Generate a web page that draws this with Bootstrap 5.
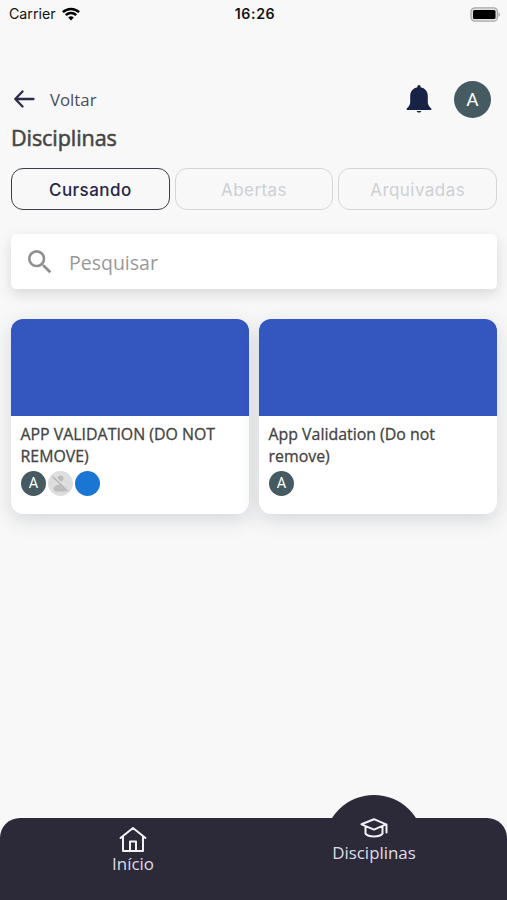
<!DOCTYPE html>
<html lang="pt-BR">
<head>
<meta charset="utf-8">
<meta name="viewport" content="width=device-width, initial-scale=1">
<title>Disciplinas</title>
<link href="https://cdn.jsdelivr.net/npm/bootstrap@5.3.0/dist/css/bootstrap.min.css" rel="stylesheet">
<style>
body{background:#f8f8f8;font-family:"Open Sans",sans-serif;color:#444;height:900px;overflow:hidden}
svg{display:block;flex:none}
.status{height:28px;padding:0 6px 0 9px;font-family:Inter,sans-serif;font-size:14.2px;line-height:28px;color:#111}
.status>div{flex:1 1 0}
.clock{font-weight:600;letter-spacing:.6px}
.topbar{height:40px;margin-top:51px;padding:0 16px 0 14px}
.back{font-size:16.8px;color:#4a4a5c;gap:15px}
.voltar{padding-top:1px}
.avatar{width:37px;height:37px;background:#455a61;color:#fff;font:400 19px/37px Roboto,sans-serif}
.avatar-sm{width:25px;height:25px;font-size:14.5px;line-height:26px}
.title{font:400 21.6px/30px "Open Sans",sans-serif;color:#454545;-webkit-text-stroke:.55px #454545;letter-spacing:-.1px;margin:4px 0 15px 11px}
.tabs{padding:0 10px 0 11px;gap:5px}
.tab{flex:1 1 0;height:42px;padding:2px 0 0;border:1px solid #d4d5d6;border-radius:12px;color:#cdd0d3;font:500 17px/38px Inter,sans-serif;letter-spacing:.45px;background:transparent}
.tab:not(.current){font-weight:400}
.tab.current{border-color:#3d3d47;color:#25254a}
.search{height:55px;margin:24px 10px 0 11px;padding-left:17px;background:#fff;border-radius:5px;box-shadow:0 5px 14px rgba(0,0,0,.13);color:#999;font-size:19.5px;gap:17px}
.search span{padding-top:2px}
.courses{margin:30px 10px 0 11px;gap:10px}
.course{flex:1 1 0;height:195px;border:0;border-radius:12px;overflow:hidden;box-shadow:0 6px 20px rgba(50,60,75,.17)}
.cover{height:97px;background:#3456bf}
.course-name{font-size:15.9px;line-height:22px;color:#444;-webkit-text-stroke:.3px #444;padding:7px 10px 0 9.5px;height:55px}
.people{padding-left:10px;gap:2px}
.person{background:#dedede}
.blue{background:#1976d2}
.bottom{height:82px;background:#2c2939;border-radius:20px 20px 0 0;color:#dedde6;font-size:16.9px;line-height:22px}
.bump{left:324px;top:-23px;width:100px;height:100px;border-radius:50%;background:#2c2939}
.bottom a{color:inherit;text-decoration:none}
.home{width:266px;padding-top:8px}
.subjects{width:216px}
</style>
</head>
<body class="d-flex flex-column">
<div class="status d-flex">
  <div class="d-flex align-items-center"><span class="carrier">Carrier</span>
    <svg width="18" height="14" viewBox="0 0 18 14" fill="none" stroke="#000" stroke-width="2.500" style="margin-left:6px"><path d="M.9 5.200a11.600 11.600 0 0 1 16.200 0M3.800 8.200a7.500 7.500 0 0 1 10.400 0"/><path d="M9 13.500 6.200 10.600a4 4 0 0 1 5.600 0z" fill="#000" stroke="none"/></svg>
  </div>
  <div class="clock text-center">16:26</div>
  <div class="d-flex align-items-center justify-content-end">
    <svg width="31" height="15" viewBox="0 0 31 15"><rect x="1" y=".8" width="26.500" height="13.400" rx="4" fill="#e0e0e0" stroke="#aaa" stroke-width="1.300"/><rect x="3" y="3" width="22.500" height="9" rx="1.500"/><path d="M28.500 5q3 2.500 0 5z" fill="#aaa"/></svg>
  </div>
</div>
<header class="topbar d-flex align-items-center justify-content-between">
  <div class="back d-flex align-items-center">
    <svg width="21" height="18" viewBox="0 0 21 18" fill="none" stroke="#2c2b4b" stroke-width="2.300" stroke-linecap="round" stroke-linejoin="round"><path d="M19.500 9H1.500M8.500 1.500 1.300 9l7.200 7.500"/></svg>
    <span class="voltar">Voltar</span>
  </div>
  <div class="d-flex align-items-center">
    <svg width="26" height="28" viewBox="0 0 26 28" fill="#182244" style="margin-right:22px"><path d="M13 0c1 0 1.600.8 1.600 1.700v.5c4.300.8 7.200 4.100 7.200 8.500v6.200c0 2.600 1 4.200 3.500 6.500V25H.7v-1.600c2.500-2.300 3.500-3.900 3.500-6.500v-6.200c0-4.400 2.900-7.700 7.200-8.500v-.5C11.400.8 12 0 13 0zM10.700 26h4.600c-.5 2-4.100 2-4.600 0z"/></svg>
    <div class="avatar rounded-circle text-center">A</div>
  </div>
</header>
<h1 class="title"><span>Disciplinas</span></h1>
<div class="tabs d-flex">
  <button class="tab current"><span>Cursando</span></button>
  <button class="tab"><span>Abertas</span></button>
  <button class="tab"><span>Arquivadas</span></button>
</div>
<div class="search d-flex align-items-center">
  <svg width="24" height="24" viewBox="3 3 18 18" fill="#8f8f8f"><path d="M15.500 14h-.79l-.28-.27A6.471 6.471 0 0 0 16 9.500 6.500 6.500 0 1 0 9.500 16c1.610 0 3.090-.59 4.230-1.570l.27.28v.79l5 4.990L20.490 19l-4.990-5zm-6 0C7.010 14 5 11.990 5 9.500S7.010 5 9.500 5 14 7.010 14 9.500 11.990 14 9.500 14z"/></svg>
  <span>Pesquisar</span>
</div>
<main class="courses d-flex">
  <article class="course card">
    <div class="cover"></div>
    <div class="course-name">APP VALIDATION (DO NOT REMOVE)</div>
    <div class="people d-flex">
      <span class="avatar avatar-sm rounded-circle text-center">A</span>
      <svg class="person rounded-circle" width="25" height="25" viewBox="0 0 25 25"><circle cx="12.500" cy="7.500" r="3" fill="#bcbcbc"/><path d="M5.500 18q1-4.500 7-4.500t7 4.500l-2 2.500h-10z" fill="#bcbcbc"/><path d="M4 4 20 19.500" stroke="#dedede" stroke-width="3"/><path d="M4.500 5.500 19.500 20" stroke="#b5b5b5" stroke-width="1.400"/></svg>
      <span class="avatar avatar-sm blue rounded-circle"></span>
    </div>
  </article>
  <article class="course card">
    <div class="cover"></div>
    <div class="course-name">App Validation (Do not remove)</div>
    <div class="people d-flex"><span class="avatar avatar-sm rounded-circle text-center">A</span></div>
  </article>
</main>
<nav class="bottom d-flex position-relative mt-auto">
  <div class="bump position-absolute"></div>
  <a href="#" class="home d-flex flex-column align-items-center position-relative">
    <svg width="28" height="27" viewBox="0 0 28 27" fill="none" stroke="#f1f1f6" stroke-width="2" stroke-linejoin="round" stroke-linecap="round"><path d="M1.500 12 14 2l12.500 10M4 10.500V25h20V10.500M11 25v-9.500h6V25"/></svg>
    <span>Início</span>
  </a>
  <a href="#" class="subjects d-flex flex-column align-items-center position-relative">
    <svg width="28" height="20" viewBox="0 0 28 20" fill="none" stroke="#f1f1f6" stroke-width="2" stroke-linejoin="round" stroke-linecap="round"><path d="M1.500 6.300 14 1.200l12 5.100-12 5.300zM5.500 8.500v7.200c3 3.800 14 3.800 17 0V8.500M26.500 6.500v8"/></svg>
    <span class="mt-1">Disciplinas</span>
  </a>
</nav>
<script src="https://cdn.jsdelivr.net/npm/bootstrap@5.3.0/dist/js/bootstrap.bundle.min.js"></script>
</body>
</html>
